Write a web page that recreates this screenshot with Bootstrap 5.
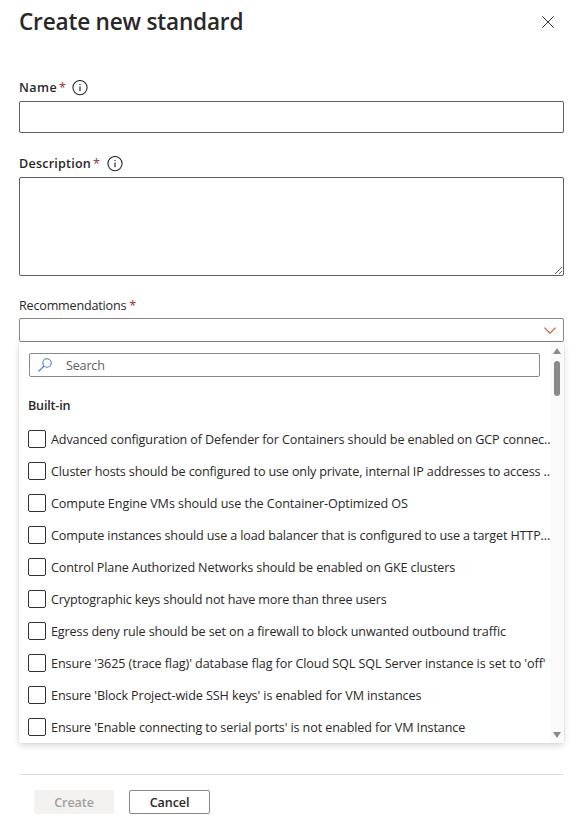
<!DOCTYPE html>
<html lang="en">
<head>
<meta charset="utf-8">
<meta name="viewport" content="width=device-width, initial-scale=1">
<title>Create new standard</title>
<link rel="stylesheet" href="https://cdn.jsdelivr.net/npm/bootstrap@5.3.0/dist/css/bootstrap.min.css">
<style>
body{font-family:"Open Sans","Noto Sans",sans-serif;font-size:12.6px;line-height:20px;color:#292827;background:#fff;letter-spacing:-.1px}
.panel{width:573px;height:830px;padding:0 9px 0 19px;overflow:hidden}
.panel-title{font-size:22.6px;line-height:32px;font-weight:600;letter-spacing:-.2px}
.panel-head{height:77px;padding-top:6px}
.close-btn{margin:10px 10px 0 0;width:12px;height:12px}
.close-btn svg,.info-icon{display:block}
.req{color:#a4262c}
.field-label{height:21px;padding-top:1px;font-weight:600;letter-spacing:.2px}
.name-label{letter-spacing:.4px}
.field-label .req{font-weight:400;margin-left:2px;width:6px}
.name-label .info-icon{margin-left:7px}
.desc-label{margin-top:20px}
.desc-label .info-icon{margin-left:8px}
.form-control.box{border:1px solid #605e5c;border-radius:2px;padding:0 8px;min-height:0;margin-top:3px}
.name-box{height:32px}
.desc-box{height:99px;resize:vertical}
.rec-label{margin-top:20px;margin-bottom:2px;letter-spacing:-.2px}
.combo{height:24px;border:1px solid #8a8886;border-radius:2px;padding-right:7px}
.drop{height:401px;border-radius:2px;box-shadow:0 3px 7px rgba(0,0,0,.14),0 0 2px rgba(0,0,0,.12)}
.drop-body{width:531px;padding:11px 0 0 9px}
.search{height:24px;width:511px;margin-left:1px;border:1px solid #8a8886;border-radius:2px;padding-left:8px;color:#605e5c}
.search-text{margin-left:14px;padding-top:2px;letter-spacing:-.2px}
.group-title{height:20px;margin-top:19px;margin-bottom:7px;font-weight:600;letter-spacing:-.2px}
.opt{height:32px;gap:5px;white-space:nowrap;overflow:hidden}
.opt span{padding-top:2px}
.opt:nth-child(1),.opt:nth-child(4),.opt:nth-child(5){letter-spacing:-.135px}
.opt:nth-child(2){letter-spacing:-.145px}
.opt:nth-child(3){letter-spacing:-.07px}
.opt:nth-child(6){letter-spacing:-.16px}
.opt:nth-child(7){letter-spacing:-.125px}
.opt:nth-child(8){letter-spacing:-.09px}
.opt:nth-child(10){letter-spacing:-.115px}
.form-check-input.tick{width:18px;height:18px;border:1px solid #323130;border-radius:2px;flex:none}
.track{width:14px;background:#fafafa;padding:6px 0 5px}
.thumb{width:6px;height:35px;border-radius:3px;background:#8a8a8a;margin-top:7px}
.foot{border-top:1px solid #e1dfdd;margin-top:31px;padding:15px 0 0 15px}
.act{height:24px;border-radius:2px;padding:1px 0 0;font-size:12.6px;line-height:22px;font-weight:600;letter-spacing:-.1px}
.act-create,.act-create:disabled{width:80px;background:#f3f2f1;border-color:#f3f2f1;color:#a19f9d;opacity:1}
.act-cancel{width:81px;border-color:#8a8886;color:#292827;margin-left:15px}
</style>
<script src="https://cdn.jsdelivr.net/npm/bootstrap@5.3.0/dist/js/bootstrap.bundle.min.js"></script>
</head>
<body>
<main class="panel d-flex flex-column">
  <header class="panel-head d-flex justify-content-between align-items-start">
    <h1 class="panel-title m-0">Create new standard</h1>
    <a class="close-btn" role="button" aria-label="Close"><svg width="12" height="12" viewBox="0 0 12 12" stroke="#323130" stroke-width="1"><path d="M.3.3l11.4 11.4M11.7.3L.3 11.7"/></svg></a>
  </header>

  <label class="field-label name-label d-flex align-items-center" for="name"><span>Name</span><span class="req">*</span>
    <svg class="info-icon" width="16" height="16" viewBox="0 0 16 16" fill="none" stroke="#292827"><circle cx="8" cy="7.6" r="7.1" stroke-width="1.1"/><path d="M8 6.4v4.8M8 3.9v1.2" stroke-width="1.2"/></svg></label>
  <input id="name" class="form-control box name-box">

  <label class="field-label desc-label d-flex align-items-center" for="desc"><span>Description</span><span class="req">*</span>
    <svg class="info-icon" width="16" height="16" viewBox="0 0 16 16" fill="none" stroke="#292827"><circle cx="8" cy="7.6" r="7.1" stroke-width="1.1"/><path d="M8 6.4v4.8M8 3.9v1.2" stroke-width="1.2"/></svg></label>
  <textarea id="desc" class="form-control box desc-box"></textarea>

  <div class="rec-label">Recommendations <span class="req">*</span></div>
  <div class="combo d-flex align-items-center justify-content-end">
    <svg width="12" height="7" viewBox="0 0 12 7" fill="none" stroke="#c8552b" stroke-width="1.1"><path d="M.4.6L6 6.2 11.6.6"/></svg>
  </div>
  <section class="drop d-flex">
    <div class="drop-body">
      <div class="search d-flex align-items-center">
        <svg width="14" height="14" viewBox="0 0 14 14" fill="none" stroke="#4a78d0" stroke-width="1.1"><circle cx="9" cy="5" r="4.2"/><path d="M6 8L.5 13.5"/></svg>
        <span class="search-text">Search</span>
      </div>
      <div class="group-title">Built-in</div>
      <div class="opts">
      <label class="opt d-flex align-items-center"><input class="form-check-input tick m-0" type="checkbox"><span>Advanced configuration of Defender for Containers should be enabled on GCP connec...</span></label>
      <label class="opt d-flex align-items-center"><input class="form-check-input tick m-0" type="checkbox"><span>Cluster hosts should be configured to use only private, internal IP addresses to access ...</span></label>
      <label class="opt d-flex align-items-center"><input class="form-check-input tick m-0" type="checkbox"><span>Compute Engine VMs should use the Container-Optimized OS</span></label>
      <label class="opt d-flex align-items-center"><input class="form-check-input tick m-0" type="checkbox"><span>Compute instances should use a load balancer that is configured to use a target HTTP...</span></label>
      <label class="opt d-flex align-items-center"><input class="form-check-input tick m-0" type="checkbox"><span>Control Plane Authorized Networks should be enabled on GKE clusters</span></label>
      <label class="opt d-flex align-items-center"><input class="form-check-input tick m-0" type="checkbox"><span>Cryptographic keys should not have more than three users</span></label>
      <label class="opt d-flex align-items-center"><input class="form-check-input tick m-0" type="checkbox"><span>Egress deny rule should be set on a firewall to block unwanted outbound traffic</span></label>
      <label class="opt d-flex align-items-center"><input class="form-check-input tick m-0" type="checkbox"><span>Ensure '3625 (trace flag)' database flag for Cloud SQL SQL Server instance is set to 'off'</span></label>
      <label class="opt d-flex align-items-center"><input class="form-check-input tick m-0" type="checkbox"><span>Ensure 'Block Project-wide SSH keys' is enabled for VM instances</span></label>
      <label class="opt d-flex align-items-center"><input class="form-check-input tick m-0" type="checkbox"><span>Ensure 'Enable connecting to serial ports' is not enabled for VM Instance</span></label>
      </div>
    </div>
    <div class="track d-flex flex-column align-items-center">
      <svg width="8" height="6" viewBox="0 0 8 6" fill="#8a8a8a"><path d="M4 0l4 6H0z"/></svg>
      <div class="thumb"></div>
      <svg class="mt-auto" width="8" height="6" viewBox="0 0 8 6" fill="#8a8a8a"><path d="M0 0h8L4 6z"/></svg>
    </div>
  </section>
  <footer class="foot d-flex">
    <button class="btn act act-create" disabled>Create</button>
    <button class="btn act act-cancel">Cancel</button>
  </footer>
</main>
</body>
</html>
